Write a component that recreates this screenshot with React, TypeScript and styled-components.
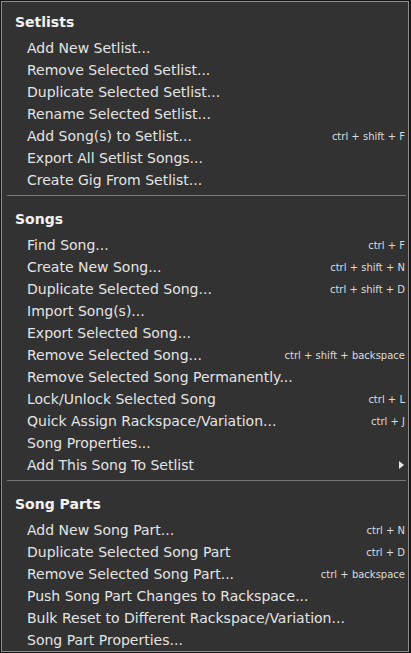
import styled, { createGlobalStyle } from "styled-components"

interface IItem {
  label: string
  shortcut?: string
  submenu?: boolean
}

interface ISection {
  title: string
  items: IItem[]
}

const sections: ISection[] = [
  {
    title: "Setlists",
    items: [
      { label: "Add New Setlist..." },
      { label: "Remove Selected Setlist..." },
      { label: "Duplicate Selected Setlist..." },
      { label: "Rename Selected Setlist..." },
      { label: "Add Song(s) to Setlist...", shortcut: "ctrl + shift + F" },
      { label: "Export All Setlist Songs..." },
      { label: "Create Gig From Setlist..." },
    ],
  },
  {
    title: "Songs",
    items: [
      { label: "Find Song...", shortcut: "ctrl + F" },
      { label: "Create New Song...", shortcut: "ctrl + shift + N" },
      { label: "Duplicate Selected Song...", shortcut: "ctrl + shift + D" },
      { label: "Import Song(s)..." },
      { label: "Export Selected Song..." },
      { label: "Remove Selected Song...", shortcut: "ctrl + shift + backspace" },
      { label: "Remove Selected Song Permanently..." },
      { label: "Lock/Unlock Selected Song", shortcut: "ctrl + L" },
      { label: "Quick Assign Rackspace/Variation...", shortcut: "ctrl + J" },
      { label: "Song Properties..." },
      { label: "Add This Song To Setlist", submenu: true },
    ],
  },
  {
    title: "Song Parts",
    items: [
      { label: "Add New Song Part...", shortcut: "ctrl + N" },
      { label: "Duplicate Selected Song Part", shortcut: "ctrl + D" },
      { label: "Remove Selected Song Part...", shortcut: "ctrl + backspace" },
      { label: "Push Song Part Changes to Rackspace..." },
      { label: "Bulk Reset to Different Rackspace/Variation..." },
      { label: "Song Part Properties..." },
    ],
  },
]

const GlobalStyle = createGlobalStyle`
  html, body {
    margin: 0;
    padding: 0;
    background: #161616;
    overflow: hidden;
  }
`

const Menu = styled.div`
  box-sizing: border-box;
  margin: 1px 0 0 1px;
  width: 408px;
  height: 651px;
  border: 1px solid #8d8d8d;
  background: #323232;
  padding-top: 9px;
  font-family: "DejaVu Sans", Verdana, sans-serif;
  color: #e4e4e4;
`

const Section = styled.div`
  display: flex;
  flex-direction: column;
`

const Title = styled.div`
  height: 22px;
  line-height: 22px;
  margin-bottom: 4px;
  padding-left: 13px;
  font-size: 14px;
  font-weight: 700;
  color: #f2f2f2;
`

const Row = styled.div`
  display: flex;
  align-items: center;
  justify-content: space-between;
  height: 22px;
  padding: 0 3px 0 25px;
`

const Label = styled.span`
  font-size: 14px;
  white-space: nowrap;
`

const Shortcut = styled.span`
  font-size: 10px;
  color: #dcdcdc;
  white-space: nowrap;
`

const Divider = styled.div`
  height: 1px;
  margin: 4px 2px 12px 5px;
  background: #7a7a7a;
`

const Arrow = styled.span`
  width: 0;
  height: 0;
  margin-right: 1px;
  border-top: 4px solid transparent;
  border-bottom: 4px solid transparent;
  border-left: 5px solid #e8e8e8;
`

function App() {
  return (
    <>
      <GlobalStyle />
      <Menu>
        {sections.map((section, i) => (
          <Section key={section.title}>
            {i > 0 && <Divider />}
            <Title>{section.title}</Title>
            {section.items.map(item => (
              <Row key={item.label}>
                <Label>{item.label}</Label>
                {item.shortcut && <Shortcut>{item.shortcut}</Shortcut>}
                {item.submenu && <Arrow />}
              </Row>
            ))}
          </Section>
        ))}
      </Menu>
    </>
  )
}

export default App
